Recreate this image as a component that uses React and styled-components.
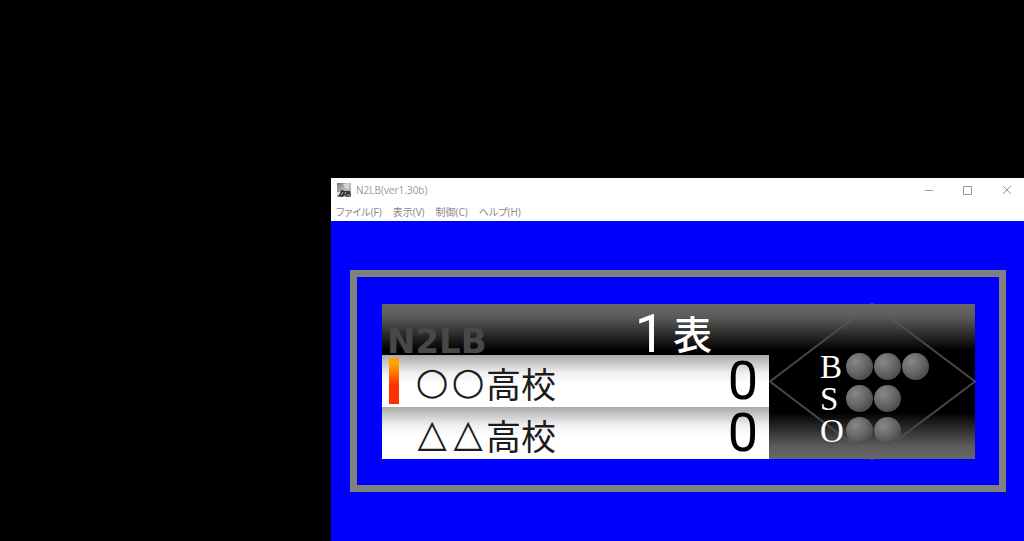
import React from 'react';
import styled, { createGlobalStyle } from 'styled-components';

const MENUS = ['ファイル(F)', '表示(V)', '制御(C)', 'ヘルプ(H)'];

const TEAMS = [
  { mark: '○○', name: '高校', score: 0, batting: true },
  { mark: '△△', name: '高校', score: 0, batting: false },
];

const COUNTS = [
  { label: 'B', lamps: 3 },
  { label: 'S', lamps: 2 },
  { label: 'O', lamps: 2 },
];

export default function App() {
  return (
    <>
      <GlobalStyle />
      <Desktop>
        <Window>
          <TitleBar>
            <AppIcon />
            <Title>N2LB(ver1.30b)</Title>
            <WindowControls />
          </TitleBar>
          <MenuBar>
            {MENUS.map((menu) => (
              <MenuButton key={menu}>{menu}</MenuButton>
            ))}
          </MenuBar>
          <Stage>
            <Frame>
              <Board>
                <ScorePanel>
                  <InningRow>
                    <Brand>N2LB</Brand>
                    <Inning>
                      <Digit>1</Digit>
                      <Half>表</Half>
                    </Inning>
                  </InningRow>
                  {TEAMS.map((team) => (
                    <TeamRow key={team.mark}>
                      <Marker $on={team.batting} />
                      <TeamName>
                        {[...team.mark].map((symbol, i) => (
                          <Symbol key={i}>{symbol}</Symbol>
                        ))}
                        {team.name}
                      </TeamName>
                      <Digit>{team.score}</Digit>
                    </TeamRow>
                  ))}
                </ScorePanel>
                <CountPanel>
                  <Diamond viewBox='0 0 206 155' preserveAspectRatio='none'>
                    <defs>
                      <linearGradient id='line' x1='0' y1='0' x2='0' y2='1'>
                        <stop offset='0' stopColor='#686868' />
                        <stop offset='0.2' stopColor='#484848' />
                        <stop offset='0.8' stopColor='#484848' />
                        <stop offset='1' stopColor='#686868' />
                      </linearGradient>
                    </defs>
                    <path d='M1 77.5 L103 0 L206 77.5 L103 155 Z' />
                  </Diamond>
                  <Counts>
                    {COUNTS.map((count) => (
                      <CountRow key={count.label}>
                        <CountLabel>{count.label}</CountLabel>
                        {Array.from({ length: count.lamps }, (_, i) => (
                          <Lamp key={i} />
                        ))}
                      </CountRow>
                    ))}
                  </Counts>
                </CountPanel>
              </Board>
            </Frame>
          </Stage>
        </Window>
      </Desktop>
    </>
  );
}

const AppIcon = () => (
  <svg width='14' height='14' viewBox='0 0 14 14'>
    <defs>
      <linearGradient id='sky' x1='0' y1='0' x2='1' y2='1'>
        <stop offset='0' stopColor='#777' />
        <stop offset='0.5' stopColor='#bbb' />
        <stop offset='1' stopColor='#aaa' />
      </linearGradient>
    </defs>
    <rect width='14' height='14' fill='url(#sky)' />
    <path d='M6 1 L12 0 L12 6 L8 5 Z' fill='#d4d4d4' />
    <path d='M0 9 L5 7 L8 8 L13 8 L14 13 L10 14 L8 12 L5 14 L0 13 Z' fill='#333' />
    <path d='M0 9 L4 8 L2 12 L0 13 Z' fill='#ddd' />
    <path d='M4 12 L6 9 M8 11 L9 9 M10 12 H13' stroke='#bbb' fill='none' />
  </svg>
);

const WindowControls = () => (
  <Controls>
    <ControlButton aria-label='最小化'>
      <svg width='10' height='10' viewBox='0 0 10 10'>
        <path d='M1 5.5 H9' />
      </svg>
    </ControlButton>
    <ControlButton aria-label='最大化'>
      <svg width='10' height='10' viewBox='0 0 10 10'>
        <path d='M0.5 1.5 H8.5 V9.5 H0.5 Z' />
      </svg>
    </ControlButton>
    <ControlButton aria-label='閉じる'>
      <svg width='10' height='10' viewBox='0 0 10 10'>
        <path d='M1 1 L9 9 M9 1 L1 9' />
      </svg>
    </ControlButton>
  </Controls>
);

const GlobalStyle = createGlobalStyle`
  * {
    box-sizing: border-box;
  }

  body {
    margin: 0;
    background-color: #000;
    font-family: 'Open Sans', 'Noto Sans CJK JP', sans-serif;
  }

  button {
    padding: 0;
    border: 0;
    background: none;
    font: inherit;
    color: inherit;
  }
`;

const Desktop = styled.main`
  min-height: 100vh;
  padding: 178px 0 0 331px;
  display: flex;
  background-color: #000;
`;

const Window = styled.section`
  flex: 1;
  min-width: 0;
  display: flex;
  flex-direction: column;
  background-color: #fff;
  color: #888;
`;

const TitleBar = styled.header`
  height: 24px;
  padding-left: 6px;
  display: flex;
  align-items: center;
  gap: 5px;
`;

const Title = styled.h1`
  flex: 1;
  margin: 0;
  font-size: 10px;
  font-weight: 400;
  color: #999;
`;

const Controls = styled.div`
  display: flex;
  gap: 4px;
`;

const ControlButton = styled.button`
  width: 35px;
  height: 24px;
  display: flex;
  align-items: center;
  justify-content: center;

  path {
    fill: none;
    stroke: #999;
  }
`;

const MenuBar = styled.nav`
  height: 19px;
  padding-left: 5px;
  display: flex;
  align-items: center;
  gap: 11px;
  font-size: 10px;
`;

const MenuButton = styled.button`
  font-feature-settings: 'palt';
  line-height: 16px;
`;

const Stage = styled.div`
  flex: 1;
  padding: 49px 18px 50px 19px;
  background-color: #00f;
`;

const Frame = styled.div`
  padding: 27px 24px 26px 25px;
  border: 7px solid #808080;
`;

const Board = styled.div`
  display: flex;
  background: linear-gradient(
    #686868,
    #5c5c5c 8%,
    #000 30%,
    #000 70%,
    #5c5c5c 92%,
    #686868
  );
`;

const ScorePanel = styled.div`
  flex: 1;
  min-width: 0;
`;

const InningRow = styled.div`
  height: 51px;
  padding-left: 5px;
  display: flex;
  align-items: center;
  justify-content: space-between;
`;

const Brand = styled.span`
  padding-top: 22px;
  font-family: 'DejaVu Sans', sans-serif;
  font-weight: 700;
  font-size: 34px;
  line-height: 30px;
  color: #484848;
`;

const Inning = styled.div`
  padding: 8px 57px 0 0;
  display: flex;
  align-items: center;
  gap: 8px;
  color: #fff;
`;

const Digit = styled.span`
  font-family: Roboto, sans-serif;
  font-size: 54px;
  line-height: 52px;
`;

const Half = styled.span`
  font-size: 39px;
  font-weight: 500;
  line-height: 52px;
`;

const TeamRow = styled.div`
  height: 52px;
  padding: 0 11px 0 7px;
  display: flex;
  align-items: center;
  background: linear-gradient(#aaa, #f0f0f0 35%, #fff 55%);
  color: #000;
`;

const Marker = styled.span`
  width: 10px;
  height: 46px;
  margin-right: 15px;
  background: ${({ $on }) =>
    $on ? 'linear-gradient(#ffa000 15%, #ff3000 60%)' : 'none'};
`;

const TeamName = styled.span`
  flex: 1;
  display: flex;
  padding-top: 4px;
  font-family: 'Noto Sans CJK JP', sans-serif;
  font-size: 35px;
  line-height: 52px;
  color: #1c1c1c;
`;

const Symbol = styled.span`
  width: 36px;
  font-family: 'DejaVu Sans', sans-serif;
  font-size: 38px;
  line-height: 48px;
  text-align: center;
`;

const CountPanel = styled.div`
  position: relative;
  width: 206px;
  display: flex;
  align-items: center;
  padding: 34px 0 0 51px;
`;

const Diamond = styled.svg`
  position: absolute;
  inset: 0;
  width: 100%;
  height: 100%;
  overflow: visible;

  path {
    fill: none;
    stroke: url(#line);
    stroke-width: 2;
    stroke-linejoin: round;
  }
`;

const Counts = styled.div`
  position: relative;
  display: flex;
  flex-direction: column;
`;

const CountRow = styled.div`
  height: 32px;
  display: flex;
  align-items: center;
  gap: 1px;
`;

const CountLabel = styled.span`
  width: 25px;
  font-family: 'Liberation Serif', serif;
  font-size: 33px;
  line-height: 32px;
  color: #fff;
`;

const Lamp = styled.span`
  width: 27px;
  height: 27px;
  border-radius: 50%;
  background: radial-gradient(circle at 35% 32%, #888, #666 45%, #404040 90%);
`;
